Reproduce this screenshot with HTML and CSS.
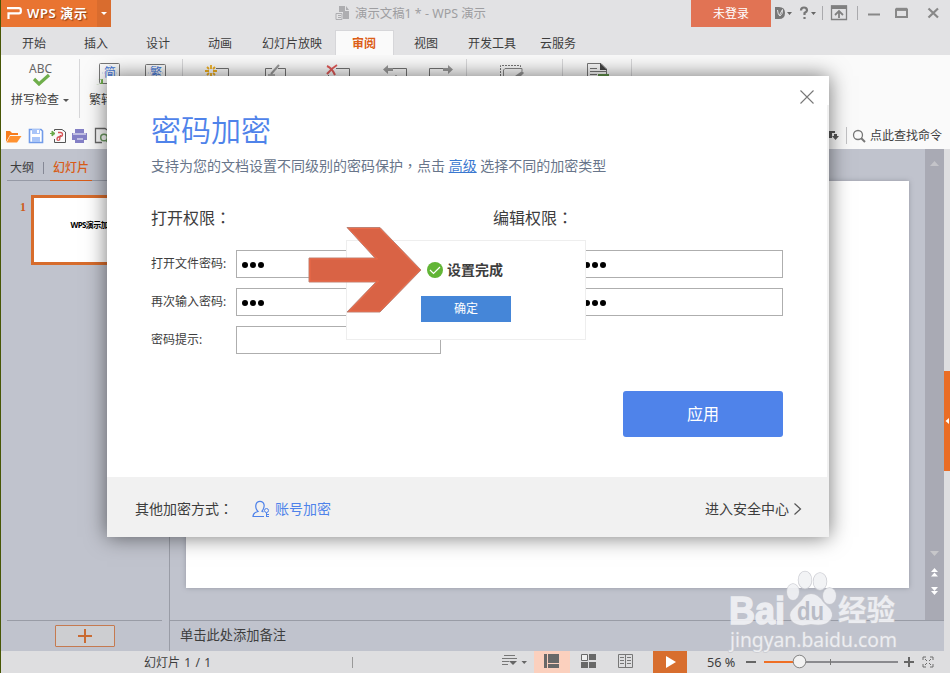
FILE: index.html
```html
<!DOCTYPE html>
<html lang="zh-CN">
<head>
<meta charset="utf-8">
<title>WPS 演示</title>
<link rel="stylesheet" href="styles.css">
</head>
<body>
<div class="app">
  <header class="titlebar">
    <div class="brand">
      <svg width="16" height="14" viewBox="0 0 16 14"><path d="M0 2.2H12Q13.8 2.2 13.8 4V5.5Q13.8 7.3 12 7.3H1.5V13" fill="none" stroke="#fff" stroke-width="2.2"/></svg>
      <span>WPS 演示</span>
    </div>
    <div class="brand-menu"><i class="caret light"></i></div>
    <div class="doc-title">
      <svg width="16" height="15" viewBox="0 0 16 15"><path d="M4 0H10V5H14V13H8V6H4ZM11 0L14 4H11Z" fill="#adadb0"/><path d="M1 7.5H7V13.5H1ZM3 9.5H6M3 11.5H6" fill="#e2e2e4" stroke="#adadb0"/></svg>
      <span>演示文稿1 * - WPS 演示</span>
    </div>
    <button class="login">未登录</button>
    <svg class="window-tools" width="179" height="27" viewBox="0 0 179 27">
      <path d="M4 7H8Q14 7 14 13T8 19H4Z" fill="#777"/><path d="M6.500 10Q7 16 9 16Q12 14 11.500 9.500L8.500 15" stroke="#e2e2e4" stroke-width="1" fill="none"/>
      <path d="M16 12H21L18.500 15ZM40 12H45L42.500 15Z" fill="#666"/>
      <path d="M30 10.500Q30 7.500 33 7.500T36 10.500Q36 11.500 33.500 13V15M33.500 17V19" stroke="#777" stroke-width="2.200" fill="none"/>
      <path d="M51.500 6V20M86.500 6V20" stroke="#aaaaad"/>
      <path d="M60.500 6H75.500V19.500H60.500Z" fill="none" stroke="#808080" stroke-width="1.300"/><path d="M60 5.500H76V9H60Z" fill="#808080"/><path d="M68 18V11M64 15L68 11L72 15" fill="none" stroke="#808080" stroke-width="1.800"/>
      <path d="M97 14.500H109" stroke="#888" stroke-width="2"/><path d="M125 9.500H136V17H125Z" fill="none" stroke="#888" stroke-width="2"/><path d="M125 9.300H136" stroke="#888" stroke-width="3"/><path d="M157.500 8.500L167 17.500M167 8.500L157.500 17.500" stroke="#888" stroke-width="2.200"/>
    </svg>
  </header>
  <nav class="tabs">
    <span>开始</span><span>插入</span><span>设计</span><span>动画</span><span class="wide5">幻灯片放映</span><span class="active">审阅</span><span class="t-view">视图</span><span class="wide4">开发工具</span><span class="wide3">云服务</span>
  </nav>
  <section class="ribbon">
    <div class="group g-spell">
      <svg width="30" height="27" viewBox="0 0 30 27"><text x="3" y="14" class="abc" textLength="23" lengthAdjust="spacingAndGlyphs">ABC</text><path d="M8 20L13 25L23 16" fill="none" stroke="#6fae4b" stroke-width="3.200"/></svg>
      <div class="ribbon-label">拼写检查<i class="caret"></i></div>
    </div>
    <div class="group g-convert">
      <svg width="102" height="28" viewBox="80 59 102 28"><rect x="99.500" y="63.500" width="20" height="20" rx="1" fill="none" stroke="#777"/><rect x="145.500" y="64.500" width="20" height="20" rx="1" fill="none" stroke="#777"/><text x="104" y="77" class="glyph">简</text><text x="150" y="77" class="glyph">繁</text><path d="M102 73H117M110 65V75M148 73H163M155.500 66V76" stroke="#86a6e6" stroke-dasharray="1 1" opacity=".5"/><path d="M96 84Q102 85 101 80H98L103 79V84" fill="#6fae4b"/></svg>
      <div class="ribbon-label convert-label">繁转简</div>
    </div>
    <div class="group g-comment">
      <svg width="283" height="24" viewBox="183 59 283 24"><g fill="none" stroke="#737373"><path d="M216 68.500H228.500V80M272 68.500H265.500V80M278 68.500H285.500V80M336 68.500H349.500V80M328.500 75V80M392 68.500H406.500V80M396 75V80M443 68.500H429.500V80M268 75H275"/></g><path d="M211 65V69M211 73V77M205 71H209M213 71H217M207 67L209 69M213 73L215 75M215 67L213 69M209 73L207 75" stroke="#efae1e" stroke-width="1.800"/><path d="M271 74L279 65" stroke="#999" stroke-width="2"/><path d="M327 66Q332 68 335 75M337 65Q332 68 327 74" stroke="#df5a58" stroke-width="2" fill="none"/><path d="M383 69.500L388 65V68H393V71H388V74ZM453 69.500L448 65V68H443V71H448V74Z" fill="#999"/></svg>
    </div>
    <div class="group g-ink">
      <svg width="95" height="24" viewBox="467 59 95 24"><path d="M500.500 76V65.500H520.500V68" fill="none" stroke="#777" stroke-dasharray="2 1"/><path d="M503.500 76V70L505 68.500H522V71" fill="none" stroke="#888"/><path d="M515 76L522 71L524 73L520 77" fill="#999"/></svg>
    </div>
    <div class="group g-doc">
      <svg width="68" height="24" viewBox="563 59 68 24"><path d="M587.500 80V63.500H601L606.500 69V75M590 68.500H597M590 71.500H606M590 74.500H597" fill="none" stroke="#777"/><path d="M600 63V70H607Z" fill="#444"/><path d="M598 74H609V80H598Z" fill="#62944b"/></svg>
    </div>
  </section>
  <section class="quickbar">
    <svg class="quick-icons" width="107" height="27" viewBox="1 122 107 27">
      <path d="M6 142V131H10L12 133H18V135H10Z" fill="#f67c1d"/><path d="M10 136H21.500L17 142.500H6.500Z" fill="#ff9130"/>
      <path d="M29.500 129.500H41L42.500 131V142.500H29.500Z" fill="#fff" stroke="#719be9" stroke-width="1.600"/><path d="M32 129H40V134H32ZM32 137H40V142H32Z" fill="#a9c5f8"/><path d="M38 130V133" stroke="#fff" stroke-width="2"/>
      <path d="M54.500 139V142.500H65.500V132L62 129.500H54.500V131" fill="none" stroke="#555"/><path d="M50 133.500H54M52 131L55 133.500L52 136Z" stroke="#69a949" fill="#69a949"/><path d="M58 132.500H60.500Q62.500 132.500 62.500 134.500T60 136.500Q57 137 57 139T59.500 140L60.500 135" stroke="#d75456" stroke-width="1.300" fill="none"/>
      <path d="M75 129H84V133H87V140H84V143H75V140H72V133H75Z" fill="#8480c6"/><path d="M73 134H86M77 139H83" stroke="#fff"/>
      <path d="M108 130.500L105 128.500H95.500V142.500H102" fill="none" stroke="#666" stroke-width="1.300"/><circle cx="104" cy="137.500" r="3.300" fill="none" stroke="#6c9861" stroke-width="1.500"/><path d="M106 140L109 143" stroke="#6c9861" stroke-width="2"/>
    </svg>
    <div class="search">
      <svg width="40" height="27" viewBox="826 122 40 27"><path d="M829 131H835V133H832V138H829ZM834 134H837V136H839L835.500 140L832 136H834Z" fill="#555"/><path d="M846.500 127V144" stroke="#c3c3c5"/><circle cx="858" cy="135" r="4.500" fill="none" stroke="#777" stroke-width="1.300"/><path d="M861 138L865 142" stroke="#777" stroke-width="2"/></svg>
      <span>点此查找命令</span>
    </div>
  </section>
  <main class="workspace">
    <aside class="outline">
      <div class="outline-tabs"><span>大纲</span><i></i><span class="current">幻灯片</span></div>
      <div class="slides"><b>1</b><div class="thumb">WPS演示加密</div></div>
      <div class="add-row"><button class="add"><svg width="14" height="14" viewBox="0 0 14 14"><path d="M0 7H14M7 0V14" stroke="#c96b33" stroke-width="2"/></svg></button></div>
    </aside>
    <div class="editor">
      <div class="stage-row">
        <div class="stage"><div class="slide"></div></div>
        <div class="scroll"><svg width="19" height="471" viewBox="925 149 19 471"><path d="M930 166L934.500 161L939 166Z" fill="#c4c4c9"/><path d="M930 551H939L934.500 556Z" fill="#c7c7ca"/><path d="M931 572L934.500 568L938 572ZM931 576.500L934.500 572.500L938 576.500ZM931 587H938L934.500 591ZM931 591H938L934.500 595Z" fill="#fff"/></svg></div>
      </div>
      <div class="notes">单击此处添加备注</div>
    </div>
    <div class="side"><div class="side-handle"><svg width="6" height="8" viewBox="0 0 6 8"><path d="M5 1V7L1.500 4Z" fill="#fff"/></svg></div></div>
  </main>
  <footer class="status">
    <span class="page-count">幻灯片 1 / 1</span><i class="status-sep"></i>
    <svg class="views" width="186" height="22" viewBox="501 651 186 22">
      <path d="M534 651H570V673H534Z" fill="#fbd0be"/><path d="M653 651H687V673H653Z" fill="#d86e2e"/>
      <path d="M504 655.500H515M502 658.500H517M502 661.500H509M502 664.500H508" stroke="#777"/><path d="M509 661H517L513 665ZM521.500 661H527L524.200 664Z" fill="#666"/>
      <path d="M544 654H547V668H544ZM548 654H559V663H548ZM548 664H559V668H548Z" fill="#686868"/>
      <path d="M589 654H596V660H589ZM581 662H588V668H581ZM589 662H596V668H589Z" fill="#686868"/><path d="M581.500 654.500H587.500V660.500H581.500Z" fill="#eee" stroke="#686868"/>
      <path d="M618.500 654.500H632.500V667.500H618.500ZM625.500 654V668M620 657.500H624M620 660.500H624M620 663.500H624M627 657.500H631M627 660.500H631M627 663.500H631" fill="none" stroke="#777"/>
      <path d="M666 656L676 662L666 668Z" fill="#fff"/>
    </svg>
    <span class="zoom">56 %</span>
    <svg class="zoom-tools" width="193" height="22" viewBox="745 651 193 22"><path d="M746 662H756M904 662H914M909 657V667" stroke="#666" stroke-width="2"/><path d="M764 662H795" stroke="#ef6f25" stroke-width="2"/><path d="M805 662H898" stroke="#8a8a8e" stroke-width="2"/><path d="M830.500 659V665" stroke="#777"/><circle cx="799.500" cy="661.500" r="6.300" fill="#f2f2f2" stroke="#848484"/><path d="M923 660V657H926M930 657H933V660M933 664V667H930M926 667H923V664M925 659L927 661M931 659L929 661M925 665L927 663M931 665L929 663" fill="none" stroke="#6c6c6c"/></svg>
  </footer>
</div>

<section class="dialog">
  <div class="dialog-body">
    <div class="dialog-content">
      <h1>密码加密</h1>
      <p class="intro">支持为您的文档设置不同级别的密码保护<span class="tc" lang="zh-TW">，</span>点击 <a>高级</a> 选择不同的加密类型</p>
      <div class="permissions">
        <div class="permission">
          <h2>打开权限<span class="tc" lang="zh-TW">：</span></h2>
          <div class="field"><label>打开文件密码:</label><div class="input"><i></i><i></i><i></i></div></div>
          <div class="field"><label>再次输入密码:</label><div class="input"><i></i><i></i><i></i></div></div>
          <div class="field"><label>密码提示:</label><div class="input"></div></div>
        </div>
        <div class="permission edit">
          <h2>编辑权限<span class="tc" lang="zh-TW">：</span></h2>
          <div class="field"><div class="input"><i></i><i></i><i></i></div></div>
          <div class="field"><div class="input"><i></i><i></i><i></i></div></div>
        </div>
      </div>
      <button class="apply">应用</button>
    </div>
    <svg class="close" width="14" height="14" viewBox="0 0 14 14"><path d="M.5 .5L13.500 13.500M13.500 .5L.5 13.500" stroke="#777" stroke-width="1.100"/></svg>
  </div>
  <div class="dialog-foot">
    <span>其他加密方式<span class="tc" lang="zh-TW">：</span></span>
    <a class="account"><svg width="18" height="18" viewBox="0 0 18 18"><path d="M12 16.500H1Q1 12.800 6 11.500C3.500 9 3.500 6.500 4 4.500C5 .3 11 .3 12 4.500C12.500 6.500 12 8.500 10 11.200L11.500 12" fill="none" stroke="#4f83ea" stroke-width="1.200"/><circle cx="14.500" cy="10.500" r="2" fill="none" stroke="#4f83ea"/><path d="M14.500 12.500V17M14.500 14.500H17M14.500 16.500H17" stroke="#4f83ea"/></svg>账号加密</a>
    <span class="security">进入安全中心<svg width="9" height="12" viewBox="0 0 9 12"><path d="M1.500 .5L7.500 6L1.500 11.500" fill="none" stroke="#555" stroke-width="1.200"/></svg></span>
  </div>
</section>
<section class="message">
  <div class="message-text"><svg width="16" height="16" viewBox="0 0 16 16"><circle cx="8" cy="8" r="8" fill="#62b536"/><path d="M3 8L6.500 11.500L13 5" fill="none" stroke="#fff" stroke-width="1.200"/></svg><span>设置完成</span></div>
  <button>确定</button>
</section>
<svg class="arrow" width="114" height="88" viewBox="308 226 114 88"><path d="M347 227.500H380L421 270L380 312H347L376 282H309V258H375Z" fill="#d96345" stroke="#bd8275"/><path d="M349 228.500H379.500L419.500 270L379.500 311H349.500L378.500 281H310V259H377.500Z" fill="#d96345" stroke="#ed6b48"/></svg>
<svg class="watermark" width="174" height="92" viewBox="727 570 174 92">
  <g class="mark">
    <text x="729" y="624" class="mark-bai" textLength="56" lengthAdjust="spacingAndGlyphs">Bai</text>
    <ellipse cx="793" cy="592" rx="6" ry="8"/><ellipse cx="805" cy="580" rx="6.500" ry="8.500"/><ellipse cx="820" cy="581.500" rx="6.500" ry="8.500"/><ellipse cx="829.500" cy="596" rx="6.500" ry="8"/>
    <path d="M811 594Q818 594 823 602L830 609Q835 617 828 622Q823 626 811 624Q799 627 793 622Q787 615 793 609L802 600Q805 594 811 594Z"/>
    <text x="838" y="621" class="mark-cn" textLength="57" lengthAdjust="spacingAndGlyphs">经验</text>
    <text x="730" y="647" class="mark-url" textLength="167" lengthAdjust="spacingAndGlyphs">jingyan.baidu.com</text>
  </g>
  <text x="797" y="620" class="mark-du" textLength="27" lengthAdjust="spacingAndGlyphs">du</text>
</svg>
</body>
</html>
```
FILE: styles.css
```css
* { box-sizing: border-box; }
body { margin: 0; width: 950px; height: 673px; overflow: hidden; position: relative; font: 12px/18px "Noto Sans", "Noto Sans CJK SC", sans-serif; color: #3d3d3d; }
button { font: inherit; border: 0; padding: 0; color: #fff; }
svg { display: block; flex: none; }
h1, h2, p { margin: 0; font-weight: 400; }
.tc { font-family: "Noto Sans CJK TC", sans-serif; }
span, label, a { white-space: nowrap; }
.caret { display: inline-block; border: solid transparent; border-width: 3px 3px 0; border-top-color: #555; vertical-align: middle; margin-left: 4px; }
.caret.light { border-top-color: #fff; margin: 0; }

.app { height: 673px; border-left: 1px solid #475605; display: flex; flex-direction: column; background: #e2e2e4; }
.titlebar { height: 27px; flex: none; display: flex; align-items: center; }
.brand { width: 96px; height: 27px; flex: none; background: #e97431; color: #fff; display: flex; align-items: center; gap: 4px; padding: 0 0 1px 6px; font-size: 13px; letter-spacing: .6px; font-weight: 600; text-shadow: 1px 1px 1px #8e4015; }
.brand-menu { width: 14px; height: 27px; flex: none; background: #d96c2e; display: flex; align-items: center; justify-content: center; }
.doc-title { margin-left: 224px; width: 356px; flex: none; display: flex; align-items: center; gap: 4px; color: #9e9ea1; font-size: 12.400px; }
.login { width: 80px; height: 27px; flex: none; background: #e17354; }
.tabs { height: 28px; flex: none; display: flex; padding-top: 3px; line-height: 28px; }
.tabs span { width: 62px; height: 25px; padding-left: 21px; }
.tabs .wide5 { width: 86px; padding-left: 13px; }
.tabs .active { width: 59px; padding-left: 16px; line-height: 26px; background: #fafafa; border: solid #d6d6d9; border-width: 1px 1px 0; color: #dc5e18; font-weight: 600; }
.tabs .t-view { width: 61px; padding-left: 20px; }
.tabs .wide4 { width: 72px; padding-left: 13px; }
.tabs .wide3 { width: 80px; padding-left: 13px; }

.ribbon { height: 67px; flex: none; display: flex; background: #fafafa; padding-top: 4px; }
.group { height: 59px; border-right: 1px solid #d7d7d9; }
.g-spell { width: 79px; padding-left: 10px; }
.g-spell svg { margin-left: 15px; }
.g-convert { width: 103px; }
.g-comment { width: 284px; }
.g-ink { width: 96px; }
.g-doc { width: 69px; }
.ribbon-label { margin-top: 5px; white-space: nowrap; }
.convert-label { margin: 4px 0 0 9px; }
.abc { font-size: 13px; fill: #666; }
.glyph { font: 12px "Noto Sans CJK SC", sans-serif; fill: #4377d7; }
.quickbar { height: 27px; flex: none; display: flex; justify-content: space-between; background: #fafafa; }
.search { display: flex; align-items: center; gap: 4px; padding-right: 8px; }

.workspace { height: 502px; flex: none; display: flex; background: #c0c3cd; }
.outline { width: 169px; border-right: 1px solid #999ca6; display: flex; flex-direction: column; }
.outline-tabs { height: 32px; margin: 0 6px; border-bottom: 1px solid #969aa6; display: flex; align-items: flex-start; line-height: 37px; }
.outline-tabs span:first-child { margin-left: 3px; }
.outline-tabs i { width: 1px; height: 12px; background: #858895; margin: 13px 6px 0 9px; }
.outline-tabs .current { height: 32px; padding: 0 3px; color: #d85c18; font-weight: 500; border-bottom: 1px solid #d85c18; }
.slides { flex: 1; display: flex; padding: 14px 0 0 19px; }
.slides b { width: 11px; padding-top: 3px; color: #cf5c1d; font-family: "Liberation Serif", serif; }
.thumb { width: 124px; height: 70px; border: 3px solid #d76c2c; background: #fff; color: #000; font: 700 8px/53px "Noto Sans", "Noto Sans CJK SC", sans-serif; text-align: center; letter-spacing: -.6px; }
.add-row { height: 31px; margin: 0 7px 0 6px; border-top: 1px solid #999ca6; display: flex; justify-content: center; padding-top: 4px; }
.add { width: 60px; height: 22px; border: 1px solid #c57a50; border-radius: 1px; background: #cdced1; display: flex; align-items: center; justify-content: center; }
.editor { width: 774px; }
.stage-row { height: 471px; display: flex; }
.stage { width: 755px; padding: 32px 16px; }
.slide { height: 407px; background: #fff; box-shadow: 0 0 5px #9699a4; }
.scroll { width: 19px; background: #a9aab4; }
.notes { height: 31px; border-top: 1px solid #999ca6; padding-left: 10px; font-size: 13.250px; line-height: 28px; }
.side { width: 6px; background: #dedee0; padding-top: 222px; }
.side-handle { height: 100px; background: #ea6d25; display: flex; align-items: center; }
.status { height: 22px; flex: none; display: flex; align-items: center; background: #dedee0; }
.page-count { width: 208px; padding: 1px 0 0 143px; font-size: 12px; word-spacing: 1.200px; }
.status-sep { margin-left: 143px; width: 1px; height: 11px; background: #999; }
.views { margin-left: 148px; }
.zoom { width: 58px; padding-left: 20px; font-size: 12.700px; }

.dialog { position: absolute; left: 107px; top: 76px; width: 722px; height: 461px; background: #fff; box-shadow: 0 0 20px rgba(0,0,0,.55); clip-path: inset(-21px -30px -30px -30px); }
.dialog-body { height: 401px; display: flex; background: linear-gradient(#f1f1f1, #f1f1f1) 720px 29px / 2px 372px no-repeat #fff; }
.dialog-content { width: 676px; padding: 33px 0 0 44px; }
.dialog h1 { font-size: 30px; line-height: 42px; color: #4f83ea; font-weight: 350; }
.intro { font-size: 14px; line-height: 20px; margin-top: 4px; color: #68758a; white-space: nowrap; }
.intro a { color: #3a78d0; text-decoration: underline; }
.permissions { display: flex; gap: 52px; height: 159px; margin-top: 30px; }
.permission { width: 290px; }
.permission h2 { font-size: 16px; line-height: 24px; margin-bottom: 20px; }
.permission h2 .tc { line-height: 16px; }
.field { height: 28px; display: flex; align-items: center; margin-bottom: 10px; }
.field label { width: 85px; }
.input { flex: 1; height: 28px; border: 1px solid #aeaeae; background: #fff; display: flex; align-items: center; gap: 2px; padding: 1px 0 0 5px; }
.input i { width: 6px; height: 6px; border-radius: 50%; background: #000; }
.edit .input { padding-left: 90px; }
.apply { display: block; width: 160px; height: 46px; margin: 26px 0 0 472px; border-radius: 3px; background: #4f83ea; font-size: 16px; }
.close { margin: 14px 0 0 17px; }
.dialog-foot { height: 60px; background: #f1f1f1; padding: 3px 27px 0 28px; display: flex; align-items: center; font-size: 14px; }
.account { display: flex; align-items: center; gap: 5px; margin-left: 19px; color: #4f83ea; }
.security { margin-left: auto; display: flex; align-items: center; gap: 4px; }
.message { position: absolute; left: 346px; top: 240px; width: 240px; height: 100px; background: #fff; border: 1px solid #eee; padding-top: 19px; }
.message-text { display: flex; align-items: center; gap: 4px; margin-left: 80px; height: 20px; font-size: 14px; font-weight: 600; }
.message button { display: block; width: 90px; height: 26px; margin: 16px 0 0 74px; background: #4586d8; }
.arrow { position: absolute; left: 308px; top: 226px; }
.watermark { position: absolute; left: 727px; top: 570px; }
.mark { fill: #f1f2f5; stroke: #c9cad0; stroke-width: 1.500px; paint-order: stroke; opacity: .9; }
.mark-bai { font: 700 39px "Liberation Sans", sans-serif; stroke: #f1f2f5; }
.mark-cn { font: 700 29px "Noto Sans CJK SC", sans-serif; }
.mark-url { font: 19px "Noto Sans", sans-serif; }
.mark-du { font: 700 25px "Liberation Sans", sans-serif; fill: #b9bcc6; }
```
